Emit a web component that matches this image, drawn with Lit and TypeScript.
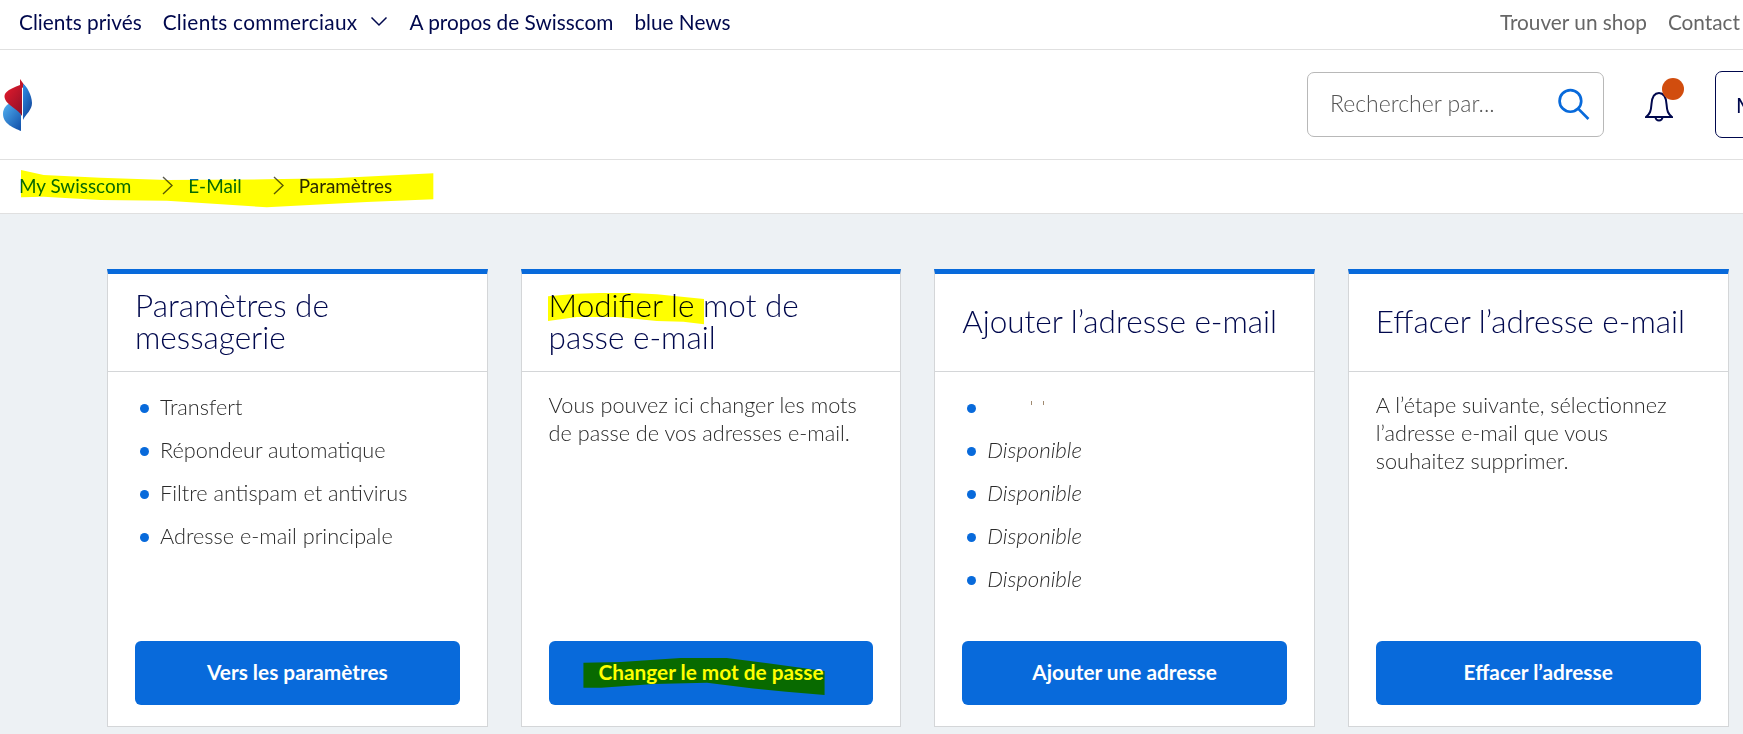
import { css, html, LitElement, svg } from "lit";
import { customElement } from "lit/decorators.js";

const chevronRight = html`<svg class="crumb-chevron" width="11" height="19" viewBox="0 0 11 19"><path d="M1 1l9 8.5L1 18" fill="none" stroke="#5a5a4a" stroke-width="1.4"/></svg>`;

const cards = [
    {
        title: "Paramètres de messagerie",
        action: "Vers les paramètres",
        items: ["Transfert", "Répondeur automatique", "Filtre antispam et antivirus", "Adresse e-mail principale"],
    },
    {
        title: "Modifier le mot de passe e-mail",
        action: "Changer le mot de passe",
        text: "Vous pouvez ici changer les mots de passe de vos adresses e-mail.",
        marked: true,
    },
    {
        title: "Ajouter l’adresse e-mail",
        action: "Ajouter une adresse",
        items: ["", "Disponible", "Disponible", "Disponible", "Disponible"],
        italic: true,
    },
    {
        title: "Effacer l’adresse e-mail",
        action: "Effacer l’adresse",
        text: "A l’étape suivante, sélectionnez l’adresse e-mail que vous souhaitez supprimer.",
    },
];

@customElement("app-root")
class AppRootElement extends LitElement {
    renderCard(card: any) {
        return html`
      <section class="card">
        <header class="card-head">
            <h2>${card.title}</h2>
            ${card.marked
                ? html`<svg class="marker title-marker" width="156" height="32" viewBox="113 100 469 96">
                    <polygon fill="#ffff00" points="113,110 200,102 330,98 440,104 582,118 582,194 520,186 440,184 320,172 200,172 113,184"/>
                  </svg>`
                : ""}
        </header>
        <div class="card-body">
            ${card.items
                ? html`<ul class=${card.italic ? "italic" : ""}>
                    ${card.items.map((item: string) => html`<li>${item ? html`<span>${item}</span>` : html`<span class="blanked"><i></i><i></i></span>`}</li>`)}
                  </ul>`
                : html`<p>${card.text}</p>`}
        </div>
        <div class="card-foot">
            <a class="button">
                ${card.action}
                ${card.marked
                    ? html`<svg class="marker button-marker" width="244" height="37" viewBox="186 113 730 112">
                        <polygon fill="#ffff00" points="186,127 300,125 400,118 480,113 620,113 750,130 916,152 916,225 800,215 700,205 560,188 400,192 240,203 186,203"/>
                      </svg>`
                    : ""}
            </a>
        </div>
      </section>
    `;
    }

    render() {
        return html`
      <nav class="top-bar">
        <a>Clients privés</a>
        <a class="with-chevron"><span>Clients commerciaux</span>
            <svg width="18" height="11" viewBox="0 0 18 11"><path d="M1.500 1.500L9 9l7.500-7.500" fill="none" stroke="#00084d" stroke-width="1.500"/></svg>
        </a>
        <a>A propos de Swisscom</a>
        <a>blue News</a>
        <span class="top-right">
            <a>Trouver un shop</a>
            <a>Contact</a>
        </span>
      </nav>
      <div class="main-bar">
        <svg class="logo" width="32" height="52" viewBox="0 0 32 52">
            <defs>
                <linearGradient id="lg-red" x1="0" y1="0" x2="0.8" y2="1">
                    <stop offset="0" stop-color="#f01c2c"/><stop offset="1" stop-color="#8e0f28"/>
                </linearGradient>
                <linearGradient id="lg-blue" x1="0" y1="0" x2="0.6" y2="1">
                    <stop offset="0" stop-color="#2f8fe8"/><stop offset="1" stop-color="#14489c"/>
                </linearGradient>
                <linearGradient id="lg-light" x1="0" y1="0" x2="0.8" y2="1">
                    <stop offset="0" stop-color="#55b4f4"/><stop offset="1" stop-color="#1556ae"/>
                </linearGradient>
            </defs>
            ${svg`
                <path d="M10 23 C14 27 19 31 19 36 L19 52 C12 49 1 45 1 35 C1 29 5 25 10 23 Z" fill="url(#lg-light)"/>
                <path d="M18 0 L23 7 L20 9 L20 37 C16 30 5 26 3 20 C1 14 5 11 18 6 Z" fill="url(#lg-red)"/>
                <path d="M21 5 C24 6 30 16 30 24 C30 31 24 35 21 41 Z" fill="url(#lg-blue)"/>
            `}
        </svg>
        <div class="search">
            <span>Rechercher par...</span>
            <svg width="33" height="33" viewBox="0 0 32 32"><circle cx="13" cy="12.500" r="10.500" fill="none" stroke="#086adb" stroke-width="2.600"/><path d="M20.500 20l10 10" stroke="#086adb" stroke-width="2.600" fill="none"/></svg>
        </div>
        <div class="bell">
            <svg width="28" height="32" viewBox="0 0 28 32"><path d="M1 27c4-3 5-6 5.500-13C7 7 10 3 14 3s7 4 7.500 11c.5 7 1.500 10 5.500 13zM10.500 27a3.500 3.500 0 0 0 7 0" fill="none" stroke="#00084d" stroke-width="2"/></svg>
            <span class="dot"></span>
        </div>
        <a class="login">My Swisscom</a>
      </div>
      <div class="crumbs">
        <a>My Swisscom</a>${chevronRight}
        <a>E-Mail</a>${chevronRight}
        <span>Paramètres</span>
        <svg class="marker crumb-marker" width="413" height="38" viewBox="62 510 1240 114">
            <polygon fill="#ffff00" points="62,510 130,525 300,533 500,540 800,538 1000,535 1300,520 1300,598 1100,606 800,622 500,602 300,600 130,590 62,592"/>
        </svg>
      </div>
      <main class="cards">
        ${cards.map((card) => this.renderCard(card))}
      </main>
    `;
    }

    static styles = css`
    :host{
        display: block;
        width: 1743px;
        height: 734px;
        overflow: hidden;
        font-family: "Lato", "Liberation Sans", sans-serif;
        color: #2a2a2a;
        background-color: #edf1f4;
    }
    .top-bar{
        box-sizing: border-box;
        height: 50px;
        display: flex;
        align-items: center;
        gap: 21px;
        padding: 0 0 6px 19px;
        background-color: white;
        border-bottom: 1px solid #e0e0e0;
        font-size: 20.8px;
        color: #00084d;
        white-space: nowrap;
    }
    .with-chevron{
        display: flex;
        align-items: center;
        gap: 13px;
    }
    .with-chevron span{
        letter-spacing: 0.3px;
    }
    .top-right{
        margin-left: auto;
        display: flex;
        gap: 21px;
        color: #666;
        margin-right: 3px;
    }
    .main-bar{
        height: 109px;
        display: flex;
        align-items: center;
        background-color: white;
        border-bottom: 1px solid #e0e0e0;
        padding-left: 2px;
        white-space: nowrap;
    }
    .logo{
        filter: blur(0.6px);
    }
    .search{
        margin-left: auto;
        margin-right: 41px;
        width: 297px;
        height: 65px;
        box-sizing: border-box;
        display: flex;
        align-items: center;
        justify-content: space-between;
        padding: 0 13px 0 22px;
        border: 1px solid #b8b8b8;
        border-radius: 7px;
        font-size: 23px;
        font-weight: 300;
        color: #555;
    }
    .search span{
        padding-bottom: 3px;
    }
    .bell{
        position: relative;
        width: 28px;
        height: 32px;
        margin-right: 42px;
        margin-top: 2px;
    }
    .dot{
        position: absolute;
        left: 17px;
        top: -12px;
        width: 22px;
        height: 22px;
        border-radius: 50%;
        background-color: #d14d0e;
    }
    .login{
        flex: none;
        box-sizing: border-box;
        width: 170px;
        height: 67px;
        margin-right: -142px;
        display: flex;
        align-items: center;
        padding-left: 20px;
        border: 1px solid #00084d;
        border-radius: 7px;
        font-size: 21px;
        color: #00084d;
    }
    .crumbs{
        position: relative;
        box-sizing: border-box;
        height: 54px;
        display: flex;
        align-items: center;
        padding: 0 0 2px 19px;
        background-color: white;
        border-bottom: 1px solid #e0e0e0;
        font-size: 18.9px;
        color: #086adb;
    }
    .crumbs span{
        color: #2a2a2a;
    }
    .crumb-chevron{
        margin: 0 15px 0 31px;
    }
    .marker{
        position: absolute;
        mix-blend-mode: multiply;
        pointer-events: none;
    }
    .crumb-marker{
        left: 21px;
        top: 10px;
    }
    .cards{
        display: grid;
        grid-template-columns: repeat(4, 380.8px);
        column-gap: 32.8px;
        padding: 55px 0 0 107px;
    }
    .card{
        height: 458px;
        box-sizing: border-box;
        display: flex;
        flex-direction: column;
        background-color: white;
        border: 1px solid #d4d6d8;
        border-top: 5px solid #086adb;
    }
    .card-head{
        position: relative;
        box-sizing: border-box;
        height: 98px;
        flex: none;
        display: flex;
        align-items: center;
        padding: 0 27px 3px;
        border-bottom: 1px solid #d4d6d8;
    }
    h2{
        margin: 0;
        font-size: 31.5px;
        font-weight: 300;
        line-height: 32.5px;
        color: #00084d;
    }
    .title-marker{
        left: 26px;
        top: 19px;
    }
    .card-body{
        flex: 1;
        padding: 19px 27px 0;
        font-size: 21.7px;
        font-weight: 300;
        line-height: 28px;
    }
    p{
        margin: 0;
    }
    ul{
        margin: 2px 0 0;
        padding: 0;
        list-style: none;
    }
    li{
        display: flex;
        align-items: center;
        gap: 11px;
        height: 28px;
        margin-bottom: 15px;
        margin-left: 5px;
    }
    li::before{
        content: "";
        width: 9px;
        height: 9px;
        margin-top: 2px;
        border-radius: 50%;
        background-color: #086adb;
        flex: none;
    }
    .italic li{
        font-style: italic;
        font-size: 22.3px;
    }
    .blanked{
        height: 28px;
        display: flex;
        gap: 11px;
        padding-left: 44px;
    }
    .blanked i{
        width: 1px;
        height: 4px;
        margin-top: 8px;
        background-color: #a08a70;
    }
    .card-foot{
        flex: none;
        padding: 0 27px 21px;
    }
    .button{
        position: relative;
        box-sizing: border-box;
        height: 64px;
        padding-bottom: 3px;
        display: flex;
        align-items: center;
        justify-content: center;
        background-color: #086adb;
        border-radius: 6px;
        color: white;
        font-size: 20.8px;
        font-weight: 700;
    }
    .button-marker{
        left: 33px;
        top: 17px;
    }
  `;
}
